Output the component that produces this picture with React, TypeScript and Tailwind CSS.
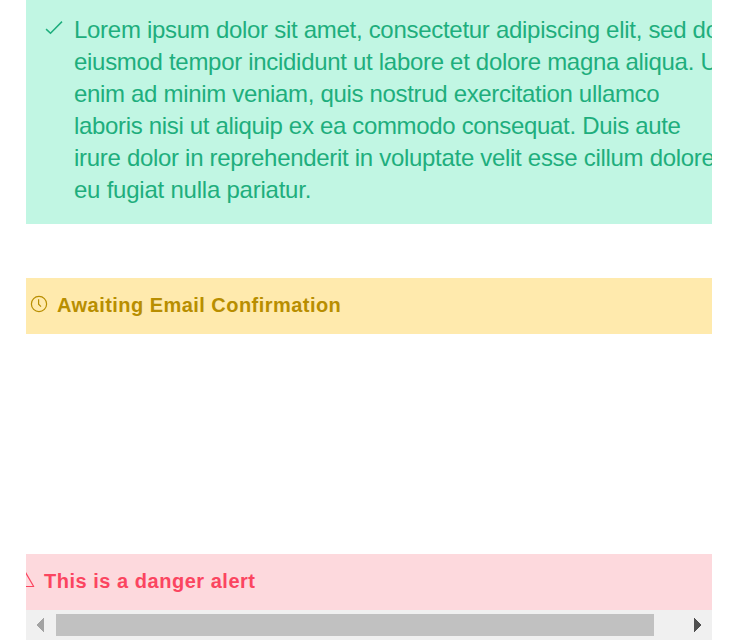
const lines = [
  { text: "Lorem ipsum dolor sit amet, consectetur adipiscing elit, sed do", tracking: "tracking-[-0.29px]" },
  { text: "eiusmod tempor incididunt ut labore et dolore magna aliqua. Ut", tracking: "tracking-[-0.3px]" },
  { text: "enim ad minim veniam, quis nostrud exercitation ullamco", tracking: "tracking-[-0.32px]" },
  { text: "laboris nisi ut aliquip ex ea commodo consequat. Duis aute", tracking: "tracking-[-0.33px]" },
  { text: "irure dolor in reprehenderit in voluptate velit esse cillum dolore", tracking: "tracking-[-0.3px]" },
  { text: "eu fugiat nulla pariatur.", tracking: "tracking-[-0.23px]" },
];

function CheckIcon() {
  return (
    <svg className="mt-[20px] ml-[19px] h-[16px] w-[19px] shrink-0" viewBox="0 0 19 16" fill="none" stroke="currentColor" strokeWidth="1.5">
      <path d="M1.1 9.1 5.5 13.3 17 1.6" />
    </svg>
  );
}

function ClockIcon() {
  return (
    <svg className="ml-[4px] h-[18px] w-[18px] shrink-0" viewBox="0 0 18 18" fill="none" stroke="currentColor" strokeWidth="1.2">
      <circle cx="9" cy="9" r="7.6" />
      <path d="M8.6 4.2v5l2.4 2.4" />
    </svg>
  );
}

function WarningIcon() {
  return (
    <svg className="h-[18px] w-[10px] shrink-0" viewBox="0 0 10 18" fill="none" stroke="currentColor" strokeWidth="1.2" strokeLinejoin="round">
      <path d="M-.6 1.2 7.7 15.5H-8" />
    </svg>
  );
}

function Scrollbar() {
  return (
    <div className="flex h-[30px] items-center bg-[#f0f0f0]">
      <div className="flex w-[30px] shrink-0 pl-[11px]">
        <svg className="h-[14px] w-[7px]" viewBox="0 0 7 14" shapeRendering="crispEdges"><path d="M7 0v14L0 7.5v-1z" fill="#a3a3a3" /><path d="M0 6h1v2H0z" fill="#a3a3a3" /></svg>
      </div>
      <div className="h-[22px] w-[598px] shrink-0 bg-[#c1c1c1]" />
      <div className="flex pl-[40px]">
        <svg className="h-[14px] w-[7px]" viewBox="0 0 7 14" shapeRendering="crispEdges"><path d="M0 0v14l7-6.5v-1z" fill="#505050" /><path d="M6 6h1v2H6z" fill="#505050" /></svg>
      </div>
    </div>
  );
}

export default function App() {
  return (
    <main className="h-[640px] w-[744px] overflow-hidden bg-white pl-[26px] font-['Liberation_Sans',Arial,sans-serif]">
      <div className="w-[686px] overflow-hidden">
        <section className="flex h-[224px] overflow-hidden bg-[#c1f6e3] text-[#1eae7d]">
          <CheckIcon />
          <div className="ml-[10px] pt-[14px] text-[24px] leading-[32px] whitespace-nowrap">
            {lines.map(({ text, tracking }) => <p key={text} className={tracking}>{text}</p>)}
          </div>
        </section>
        <section className="mt-[54px] flex h-[56px] items-center bg-[#ffeaad] pb-[2px] text-[#b88e00]">
          <div className="-mt-[2px] flex"><ClockIcon /></div>
          <p className="ml-[9px] text-[20px] leading-[32px] font-bold tracking-[0.46px] whitespace-nowrap">Awaiting Email Confirmation</p>
        </section>
        <section className="mt-[220px] flex h-[56px] items-center bg-[#fdd9dd] pb-[2px] text-[#fb4560]">
          <div className="-mt-[2px] flex"><WarningIcon /></div>
          <p className="ml-[8px] text-[20px] leading-[32px] font-bold tracking-[0.52px] whitespace-nowrap">This is a danger alert</p>
        </section>
        <Scrollbar />
      </div>
    </main>
  );
}
